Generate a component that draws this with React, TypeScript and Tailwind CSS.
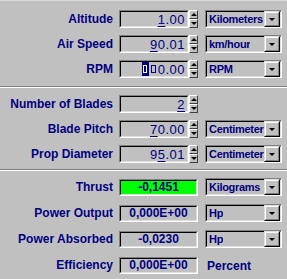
const font = { fontFamily: '"Liberation Sans", Arial, sans-serif' };

function Sunken({ className = "", children }: { className?: string; children?: React.ReactNode }) {
  return (
    <div className={`border border-t-[#808080] border-l-[#808080] border-b-white border-r-white ${className}`}>
      <div className="h-full w-full border border-t-black border-l-black border-b-[#dfdfdf] border-r-[#dfdfdf]">
        {children}
      </div>
    </div>
  );
}

function Raised({ className = "", children }: { className?: string; children?: React.ReactNode }) {
  return (
    <div className={`border border-t-[#dfdfdf] border-l-[#dfdfdf] border-b-black border-r-black bg-[#c0c0c0] ${className}`}>
      <div className="flex h-full w-full items-center justify-center border border-t-white border-l-white border-b-[#808080] border-r-[#808080]">
        {children}
      </div>
    </div>
  );
}

function Spinner() {
  return (
    <div className="flex h-[18px] w-[9px] flex-col">
      <div className="flex h-[9px] items-center justify-center border border-t-white border-l-white border-b-[#404040] border-r-[#404040] bg-[#c0c0c0]">
        <div className="h-0 w-0 border-x-[3px] border-b-[3px] border-x-transparent border-b-black" />
      </div>
      <div className="flex h-[9px] items-center justify-center border border-t-white border-l-white border-b-[#404040] border-r-[#404040] bg-[#c0c0c0]">
        <div className="h-0 w-0 border-x-[3px] border-t-[3px] border-x-transparent border-t-black" />
      </div>
    </div>
  );
}

function Dropdown({ text }: { text: string }) {
  return (
    <Sunken className="h-[18px] w-[77px]">
      <div className="flex h-full items-center justify-between">
        <span className="overflow-hidden whitespace-nowrap pl-[2px] text-[11px] font-bold leading-none tracking-[-0.3px] text-[#000080]">{text}</span>
        <Raised className="h-[16px] w-[16px] shrink-0">
          <div className="h-0 w-0 border-x-[3px] border-t-[3px] border-x-transparent border-t-black" />
        </Raised>
      </div>
    </Sunken>
  );
}

function Label({ text }: { text: string }) {
  return (
    <div className="w-[114px] shrink-0 pr-[1px] text-right text-[12px] font-bold leading-none text-[#000080] whitespace-nowrap">
      {text}
    </div>
  );
}

function Value({ pre, u, post }: { pre: string; u: string; post: string }) {
  return (
    <span>
      {pre}
      <span className="underline underline-offset-2">{u}</span>
      {post}
    </span>
  );
}

function InputRow({ label, value, unit }: { label: string; value: React.ReactNode; unit?: string }) {
  return (
    <div className="flex h-[18px] items-center">
      <Label text={label} />
      <Sunken className="ml-[5px] h-[18px] w-[70px]">
        <div className="flex h-full items-center justify-end pr-[2px] text-[13px] leading-none tracking-[0.5px] text-[#000080]">{value}</div>
      </Sunken>
      <Spinner />
      {unit && <div className="ml-[7px]"><Dropdown text={unit} /></div>}
    </div>
  );
}

function OutputRow({ label, value, unit, green, plain }: { label: string; value: string; unit: string; green?: boolean; plain?: boolean }) {
  return (
    <div className="flex h-[18px] items-center">
      <Label text={label} />
      <Sunken className={`ml-[5px] h-[17px] w-[79px] ${green ? "bg-[#00ff00]" : ""}`}>
        <div className="flex h-full items-center justify-center text-[12px] font-bold leading-none text-[#000080]">{value}</div>
      </Sunken>
      <div className="ml-[7px]">
        {plain ? (
          <span className="pl-[2px] text-[12px] font-bold text-[#000080]">{unit}</span>
        ) : (
          <Dropdown text={unit} />
        )}
      </div>
    </div>
  );
}

function Separator() {
  return (
    <div>
      <div className="h-px bg-[#808080]" />
      <div className="h-px bg-white" />
    </div>
  );
}

export default function App() {
  return (
    <div className="h-[279px] w-[287px] overflow-hidden bg-[#c0c0c0]" style={font}>
      <div className="h-px bg-[#d8d8d8]" />
      <div className="flex flex-col gap-[7px] pt-[9px]">
        <InputRow label="Altitude" value={<Value pre="" u="1" post=".00" />} unit="Kilometers" />
        <InputRow label="Air Speed" value={<Value pre="" u="9" post="0.01" />} unit="km/hour" />
        <InputRow
          label="RPM"
          value={
            <span className="flex items-center">
              <span className="mr-[2px] inline-flex h-[14px] w-[7px] items-center justify-center bg-[#000080]">
                <span className="h-[8px] w-[4px] border border-white" />
              </span>
              <span className="mr-[2px] h-[8px] w-[5px] border border-[#000080]" />
              <span>0.00</span>
            </span>
          }
          unit="RPM"
        />
      </div>
      <div className="mt-[8px]">
        <Separator />
      </div>
      <div className="flex flex-col gap-[7px] pt-[7px]">
        <InputRow label="Number of Blades" value={<Value pre="" u="2" post="" />} />
        <InputRow label="Blade Pitch" value={<Value pre="" u="7" post="0.00" />} unit="Centimeters" />
        <InputRow label="Prop Diameter" value={<Value pre="9" u="5" post=".01" />} unit="Centimeters" />
      </div>
      <div className="mt-[6px]">
        <Separator />
      </div>
      <div className="flex flex-col gap-[8px] pt-[7px]">
        <OutputRow label="Thrust" value="-0,1451" unit="Kilograms" green />
        <OutputRow label="Power Output" value="0,000E+00" unit="Hp" />
        <OutputRow label="Power Absorbed" value="-0,0230" unit="Hp" />
        <OutputRow label="Efficiency" value="0,000E+00" unit="Percent" plain />
      </div>
    </div>
  );
}
